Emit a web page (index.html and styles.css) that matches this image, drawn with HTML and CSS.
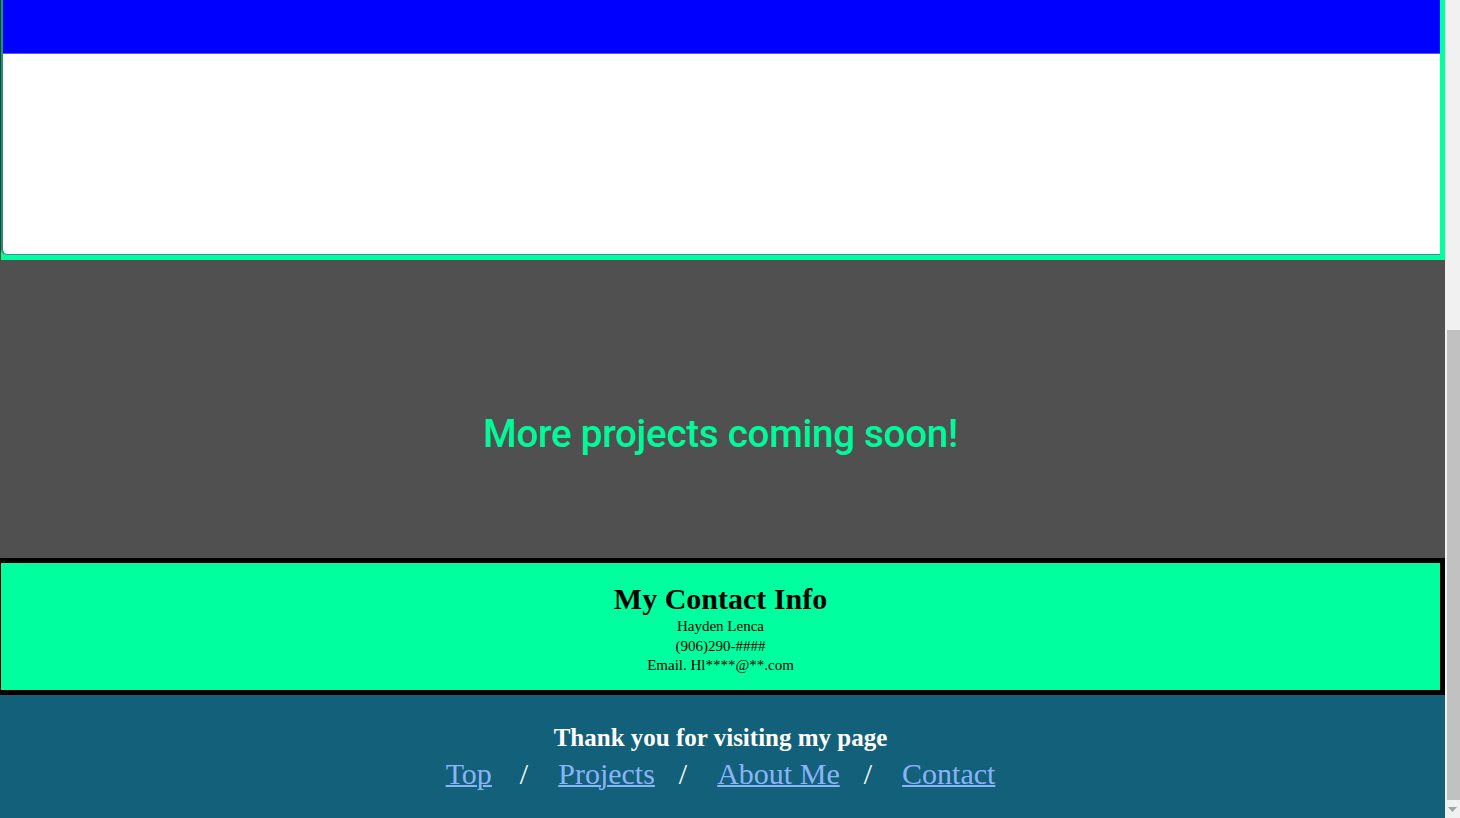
FILE: index.html
```html
<!DOCTYPE html>
<html lang="en">
<head>
<meta charset="utf-8">
<title>Projects</title>
<link rel="stylesheet" href="styles.css">
</head>
<body>
<div class="window">
  <main class="page">
    <section class="project-frame">
      <div class="project-card">
        <div class="project-header"></div>
        <div class="project-body"></div>
      </div>
    </section>
    <section class="more">
      <h2 class="more-title">More projects coming soon!</h2>
    </section>
    <section class="contact">
      <h2 class="contact-title">My Contact Info</h2>
      <p class="contact-line">Hayden Lenca</p>
      <p class="contact-line">(906)290-####</p>
      <p class="contact-line">Email. Hl****@**.com</p>
    </section>
    <footer class="footer">
      <h3 class="thanks">Thank you for visiting my page</h3>
      <nav class="footer-nav">
        <a href="#top">Top</a><span class="sep sep-first">/</span><a href="#projects">Projects</a><span class="sep">/</span><a href="#about">About Me</a><span class="sep">/</span><a href="#contact">Contact</a>
      </nav>
    </footer>
  </main>
  <div class="scrollbar">
    <div class="scroll-track"><div class="scroll-thumb"></div></div>
    <div class="scroll-arrow"><svg width="9" height="5" viewBox="0 0 9 5"><path d="M0 0H9L4.5 5Z" fill="#a3a3a3"/></svg></div>
  </div>
</div>
</body>
</html>
```
FILE: styles.css
```css
html, body {
  margin: 0;
  padding: 0;
  height: 818px;
  overflow: hidden;
}
body {
  font-family: "Liberation Serif", "Times New Roman", serif;
}
.window {
  display: flex;
  width: 1460px;
  height: 818px;
}
.page {
  width: 1445px;
  display: flex;
  flex-direction: column;
}
.project-frame {
  background: #00ff9f;
  padding: 0 5px 5px 0;
  height: 260px;
  box-sizing: border-box;
  border-left: 1px solid #0b4d3c;
}
.project-card {
  height: 255px;
  box-sizing: border-box;
  background: #fff;
  border-left: 2px solid #2d8a76;
  border-bottom: 1px solid #4b8aa3;
  border-bottom-left-radius: 6px;
  display: flex;
  flex-direction: column;
  overflow: hidden;
}
.project-header {
  height: 53px;
  background: #0000ff;
  border-bottom: 1px solid #5a5aff;
}
.project-body {
  flex: 1;
}
.more {
  background: #505050;
  height: 298px;
  box-sizing: border-box;
  padding: 151px 4px 0 0;
  text-align: center;
}
.more-title {
  margin: 0;
  font-family: Roboto, "Liberation Sans", sans-serif;
  font-weight: 500;
  font-size: 38.5px;
  line-height: 45px;
  color: #00f99a;
  letter-spacing: -0.25px;
}
.contact {
  background: #00ff9f;
  border-style: solid;
  border-color: #000;
  border-width: 5px 5px 5px 1px;
  height: 137px;
  box-sizing: border-box;
  padding-top: 17px;
  text-align: center;
  color: #000;
}
.contact-title {
  margin: 0;
  font-size: 30px;
  line-height: 37px;
  font-weight: bold;
}
.contact-line {
  margin: 0;
  font-size: 15px;
  line-height: 19.5px;
}
.footer {
  flex: 1;
  background: #12607a;
  padding: 25px 4px 0 0;
  text-align: center;
  color: #fff;
}
.thanks {
  margin: 0;
  font-size: 25px;
  line-height: 36px;
  font-weight: bold;
}
.footer-nav {
  font-size: 30px;
  line-height: 36px;
}
.footer-nav a {
  color: #8ab4f8;
  text-decoration: underline;
  text-decoration-thickness: 2px;
}
.sep {
  color: #fff;
  padding: 0 30px 0 24px;
}
.sep-first {
  padding-left: 28px;
}
.scrollbar {
  width: 15px;
  background: #f1f1f1;
  display: flex;
  flex-direction: column;
}
.scroll-track {
  flex: 1;
  padding-top: 330px;
  padding-left: 2px;
  box-sizing: border-box;
}
.scroll-thumb {
  height: 470px;
  background: #c1c1c1;
}
.scroll-arrow {
  height: 18px;
  display: flex;
  align-items: center;
  justify-content: center;
}
```
